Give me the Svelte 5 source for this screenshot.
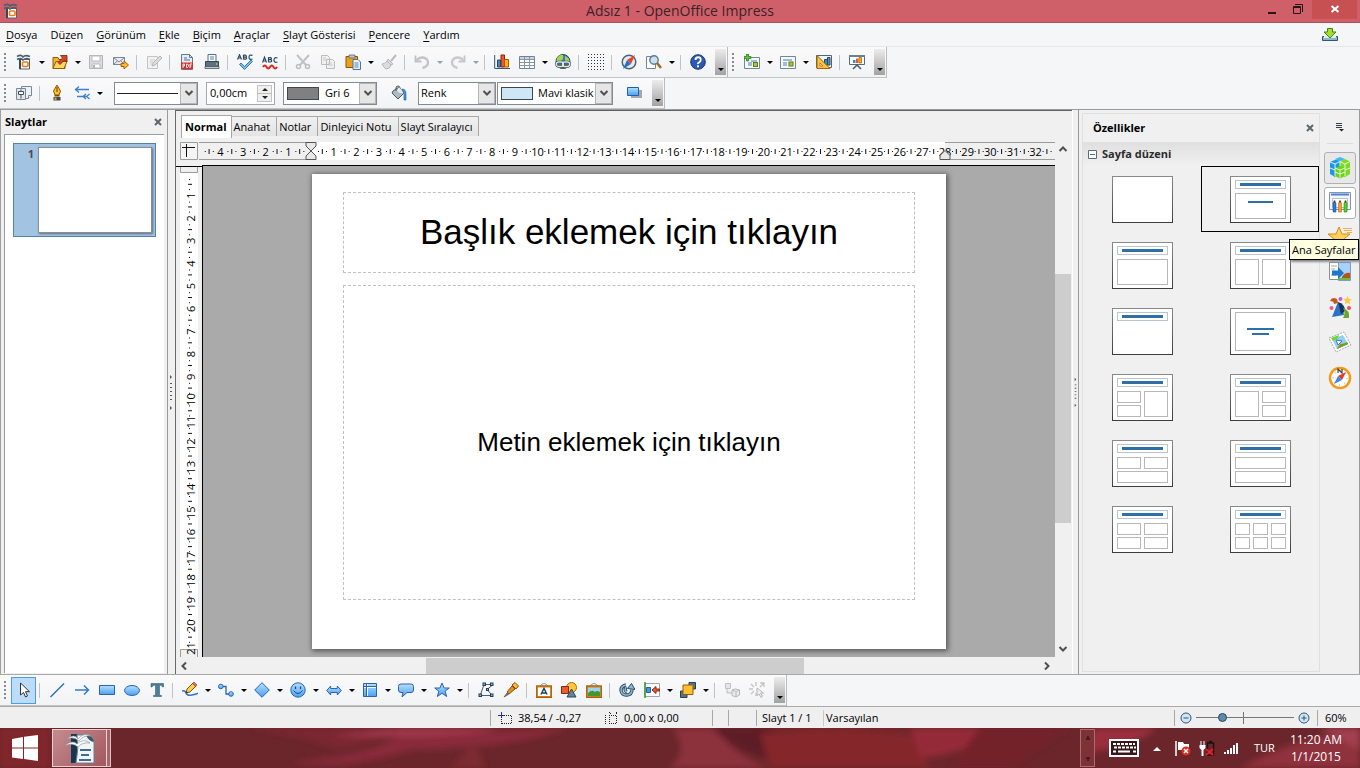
<script lang="ts">
  type Tool = { icon: string; label: string; drop?: boolean; off?: boolean; on?: boolean };
  type Item = Tool | '|';

  const menus = [
    ['', 'D', 'osya'], ['Dü', 'z', 'en'], ['', 'G', 'örünüm'], ['', 'E', 'kle'], ['', 'B', 'içim'],
    ['', 'A', 'raçlar'], ['', 'S', 'layt Gösterisi'], ['', 'P', 'encere'], ['', 'Y', 'ardım']
  ];

  const blue = 'fill="url(#blue)" stroke="#2a62b8"';

  // 16x16 toolbar glyphs
  const glyphs: Record<string, string> = {
    new: '<path d="M3.500 5.500h10v9.500h-10z" fill="#fff" stroke="#4f6473"/><path d="M3 5h2v10H3z" fill="#34495a"/><path d="M1 2.500q4-2.500 6 .5 2-2.500 7-.5M1 5.500q4-2 6 .5 3-2.500 7-.5" fill="none" stroke="#4d5f6d" stroke-width="1.600"/><rect x="6.500" y="8" width="5.500" height="4.500" rx="1" fill="#fff" stroke="#ee7b17" stroke-width="1.600"/>',
    open: '<path d="M1 3.500h5l1 2h6v9H1z" fill="#f7b32b" stroke="#9c5a00"/><path d="M1 14.500l3-7h11l-3 7z" fill="#ffd75e" stroke="#9c5a00"/><path d="M6 8.500l4.500-4.500-2-2.500h6.500V8l-2.500-2L8 10.500z" fill="#d9442b" stroke="#7c1d0e" stroke-width=".8"/>',
    save: '<path d="M1.500 1.500h13v13h-13z" fill="#dcdcdc" stroke="#b5b5b5"/><path d="M4 2h8v5H4zM4 10h8v4H4z" fill="#fff" stroke="#bcbcbc"/><path d="M5 11h2v3H5z" fill="#b5b5b5"/>',
    mail: '<path d="M.5 3.500h11v7H.5z" fill="#e8edf3" stroke="#7a8794"/><path d="M.5 3.500L6 8l5.500-4.500M.5 10.500L4.500 7M11.500 10.500L8 7" fill="none" stroke="#7a8794"/><path d="M8 9.500h3V7l4.500 4-4.500 4v-2.500H8z" fill="#ffb735" stroke="#a85e00"/>',
    edit: '<path d="M1.500 2.500h10v12h-10z" fill="#f2f2f2" stroke="#c4c4c4"/><path d="M4 6h5M4 8h3M4 10h2" stroke="#ccc"/><path d="M6 12l1-3 7-7 2 2-7 7z" fill="#dedede" stroke="#b6b6b6"/>',
    pdf: '<path d="M2.500.5h8l3 3v12h-11z" fill="#e4ecf4" stroke="#64788a"/><path d="M10.500.5v3h3" fill="none" stroke="#64788a"/><path d="M5 4h3M5 6h6" stroke="#4b78a8"/><rect x="2" y="8.500" width="12" height="6.500" fill="#dd2b2b"/><path d="M4 14v-4h1.500v2H4M7.500 13.500v-3.500h1l1 1v1.500l-1 1zM11 14v-4h2M11 12h1.500" fill="none" stroke="#fff" stroke-width=".9"/>',
    print: '<path d="M4 8V.5h8V8" fill="#f4f8fb" stroke="#557085"/><path d="M6 3h4M6 5h4" stroke="#5d88ad"/><path d="M1.500 7.500h13v5h-13z" fill="#5f7180" stroke="#36454f"/><path d="M1 12.500h14v2H1z" fill="#c5ccd1" stroke="#4b5964" stroke-width=".8"/><path d="M12 10h1.500" stroke="#8dea3a" stroke-width="1.500"/>',
    spell: '<path d="M0.600 5.500L2.500.8l2 4.700M1.200 4h2.600M6.500.8v4.700M6.500 1.200h2q2 1 0 2h-2 2.200q2 1 0 2H6.500M15.500 1.400q-3.500-1.200-3.500 1.800t3.500 1.800" fill="none" stroke="#2c4a62" stroke-width="1.200"/><path d="M4 9l3.500 3.500L14 6l1.500 1.500-8 8L2.500 10.500z" fill="#6cc0f5" stroke="#1e62a8" stroke-width=".8"/>',
    autospell: '<path d="M0.600 8.500L2.500 3.200l2 5.300M1.200 7h2.600M6.500 3.200v5M6.500 3.600h2q2 1 0 2h-2 2.200q2 1.200 0 2.400H6.500M15.500 4q-3.500-1.200-3.500 2t3.500 2" fill="none" stroke="#2c4a62" stroke-width="1.200"/><path d="M1 13q1.800-3 3.500 0t3.500 0 3.500 0 3.500 0" fill="none" stroke="#e42418" stroke-width="2"/>',
    cut: '<path d="M2 1l9 10M14 1L5 11" stroke="#c2c2c2" stroke-width="2"/><circle cx="3.500" cy="12.500" r="2" fill="none" stroke="#bdbdbd" stroke-width="1.500"/><circle cx="12.500" cy="12.500" r="2" fill="none" stroke="#bdbdbd" stroke-width="1.500"/>',
    copy: '<path d="M1.500 1.500h6l2 2v7h-8zM6.500 5.500h6l2 2v7h-8z" fill="#f0f0f0" stroke="#bcbcbc"/><path d="M3 4h3M3 6h3M8 9h4M8 11h5" stroke="#c9c9c9"/>',
    paste: '<path d="M1 2.500h11.500v11H1z" fill="#e9a01c" stroke="#8d5300"/><path d="M4 1h6v3H4z" fill="#bcc6ce" stroke="#5c6a75" stroke-width=".8"/><path d="M8 5.500h5l2.500 2.500v7.500H8z" fill="#eaf3fb" stroke="#52728e"/><path d="M9.500 9h4M9.500 11h4M9.500 13h4" stroke="#4984bd"/>',
    brush: '<path d="M15 1l-5 6" stroke="#bcbcbc" stroke-width="2"/><path d="M7 5l5 5-2 1-4-4zM6 7l4 4q-1 4-5 4-2-1-4-5 3 0 5-3z" fill="#dcdcdc" stroke="#b8b8b8"/>',
    undo: '<path d="M1.500 1.500v6h6" fill="none" stroke="#c0c0c0" stroke-width="1.800"/><path d="M2 7q3-4 7-3.500 5 1 5 5T8.500 14" fill="none" stroke="#c4c4c4" stroke-width="2.400"/>',
    redo: '<path d="M14.500 1.500v6h-6" fill="none" stroke="#c6c6c6" stroke-width="1.800"/><path d="M14 7q-3-4-7-3.500-5 1-5 5T7.500 14" fill="none" stroke="#c9c9c9" stroke-width="2.400"/>',
    chart: '<path d="M.7 1v13.500H16" fill="none" stroke="#3b556b"/><path d="M3.500 6h3v7h-3z" fill="#2f8be0" stroke="#124a88"/><path d="M7 1h3.500v12H7z" fill="#f0582b" stroke="#8b240b"/><path d="M10.500 5.500h4V13h-4z" fill="#ffb021" stroke="#a05c00"/>',
    table: '<path d="M.5 2.500h15v12H.5z" fill="#fff" stroke="#6f8494"/><path d="M1 3h14v2H1z" fill="#c9d6e0"/><path d="M1 5.500h14M1 8.500h14M1 11.500h14M5.500 3v11M10.500 3v11" stroke="#8496a4"/>',
    link: '<circle cx="8" cy="7.500" r="7" fill="#3a79bd" stroke="#24486b"/><path d="M2 4q3-4 6-3 1 4-2 6H1.500zM10 2q5 2 4.500 6L10 7z" fill="#a5d64a"/><path d="M1.500 10h13q-1.500 5-6.500 5t-6.500-5z" fill="#4b6f58"/><rect x="1.500" y="8" width="7" height="4.500" rx="2" fill="none" stroke="#31434c" stroke-width="2.400"/><rect x="7.500" y="8" width="7" height="4.500" rx="2" fill="none" stroke="#31434c" stroke-width="2.400"/><rect x="1.500" y="8" width="7" height="4.500" rx="2" fill="none" stroke="#dfe6ea" stroke-width="1.300"/><rect x="7.500" y="8" width="7" height="4.500" rx="2" fill="none" stroke="#dfe6ea" stroke-width="1.300"/>',
    dots: '<path d="M0 .5h16M0 3.500h16M0 6.500h16M0 9.500h16M0 12.500h16M0 15.500h16" stroke="#333" stroke-dasharray="1 2"/>',
    compass: '<circle cx="8" cy="8" r="6.800" fill="#e6ebef" stroke="#4e6678" stroke-width="1.500"/><path d="M14 1L6 6l4 4z" fill="#e8432b"/><path d="M2 15l4-9 4 4z" fill="#2a6fc9"/>',
    zoom: '<path d="M.5 2.500h9v12h-9z" fill="#fff" stroke="#718696"/><circle cx="8" cy="6" r="4.200" fill="#c5e2f5" stroke="#64798a" stroke-width="1.400"/><path d="M11 9l4 5" stroke="#a86a1b" stroke-width="2.500"/>',
    help: '<circle cx="8" cy="8" r="7.300" fill="#2c58b0" stroke="#173777"/><path d="M5.500 6q0-2.700 2.700-2.700T10.700 6q0 1.500-1.500 2.300T8 10" fill="none" stroke="#fff" stroke-width="1.900"/><rect x="7" y="11.300" width="2" height="2" fill="#fff"/>',
    slidenew: '<path d="M.5 3.500h15v11H.5z" fill="#f4f8fb" stroke="#738797"/><path d="M7 7h6M4 9h4M4 11h4" stroke="#4c7fae"/><rect x="9.500" y="8.500" width="4" height="4" fill="#a7c73a" stroke="#5e7d12"/><path d="M2.500 0h2v2.500H7v2H4.500V7h-2V4.500H0v-2h2.500z" fill="#58c33a" stroke="#1f7a14" stroke-width=".7"/>',
    slide: '<path d="M.5 2.500h15v12H.5z" fill="#f4f8fb" stroke="#738797"/><path d="M3 6h9M3 9h4M3 11h4" stroke="#4c7fae"/><rect x="9" y="8" width="4" height="4" fill="#a7c73a" stroke="#5e7d12"/>',
    design: '<path d="M.5 1.500h15v12H.5z" fill="#eff4f8" stroke="#4f6678"/><path d="M8.500 5.500h3V11h-3z" fill="#3688cf" stroke="#124a88"/><path d="M11.500 3.500h2.500V11h-2.500z" fill="#6d8ba0" stroke="#2a4a60"/><path d="M1 1.500v13h13z" fill="#ffc23c" stroke="#a26205"/><path d="M4 9v3h3z" fill="#fff" stroke="#a26205" stroke-width=".7"/>',
    show: '<path d="M.5 1.500h15v9H.5z" fill="#fff" stroke="#556b7c"/><path d="M0 1h16v2H0z" fill="#6b8090"/><path d="M4 6h2.500v3H4z" fill="#2f8be0"/><path d="M7 4.500h2.500V9H7z" fill="#f0582b"/><path d="M10 3.500h2.500V9H10z" fill="#ffb021" stroke="#9a4b00" stroke-width=".6"/><path d="M4 15l4-4 4 4" fill="none" stroke="#465a68" stroke-width="1.500"/>',
    styles: '<path d="M5.500 1.500h10v9l-3 3h-7z" fill="#eef2f5" stroke="#7a8994"/><path d="M15.500 10.500h-3v3" fill="#fff" stroke="#7a8994"/><path d="M.5 3.500h9v11h-9z" fill="#e0e6ea" stroke="#7a8994"/><path d="M2.500 6.500h5v3h-5zM5 9.500v4M5 6V4.500" fill="#fff" stroke="#3f525f"/>',
    pen: '<path d="M8 0l3.500 6-1.500 4H6L4.500 6z" fill="#ffc02e" stroke="#8e5708"/><path d="M8 2v5" stroke="#6a3f00"/><path d="M5.500 10h5v1.500h-5z" fill="#7a4b06"/><path d="M4.500 12h7v3.500h-7z" fill="#3d4a54"/><path d="M5.500 12.500h2v2.500h-2z" fill="#e49b25"/>',
    arrowstyle: '<path d="M1 4.500h14M5 1.500L1.500 4.500 5 7.500" fill="none" stroke="#3c80cf" stroke-width="1.300"/><path d="M3 11.500h9M12 9l-3 2.500 3 2.500M15.500 9l-3 2.500 3 2.500" fill="none" stroke="#3c80cf" stroke-width="1.300"/>',
    bucket: '<path d="M2 6l6-4 5 6-6 6-6-6z" fill="#aeb9c1" stroke="#475660"/><path d="M5 6V3q0-2 2-2t2 2v4" fill="none" stroke="#475660"/><path d="M8 2l5 6q-4 1-7-2z" fill="#e6ebee"/><path d="M11 4q4 0 4 5v6h-2V9z" fill="#3d98d9" stroke="#1c5c94" stroke-width=".6"/>',
    shadow: '<path d="M4 5h11v8H4z" fill="#a7a7a7"/><path d="M.5 2.500h11v8H.5z" fill="url(#blue)" stroke="#1f5fb5"/>',
    select: '<path d="M4.500 1v12l3-2.500 2 4.500 2-1-2-4.300h4z" fill="#fff" stroke="#333"/>',
    line: '<path d="M1.500 15L15 1.500" stroke="#2f6dc0" stroke-width="1.400"/>',
    arrow: '<path d="M1 8h13M10 3.500L14.500 8 10 12.500" fill="none" stroke="#3479cc" stroke-width="1.500"/>',
    rect: `<path d="M.5 3.500h15v9H.5z" ${blue}/>`,
    ellipse: `<ellipse cx="8" cy="8.500" rx="7.500" ry="5" ${blue}/>`,
    text: '<path d="M2 1.500h12.500v3.500h-1q-.5-2-3-2v9.500q0 1 2 1v1H4.500v-1q2 0 2-1V3q-3 0-3.500 2H2z" fill="#4b7c99" stroke="#35617c" stroke-width=".6"/>',
    curve: '<path d="M0 9q3-1 4 2t6 2 6-2" fill="none" stroke="#3479cc" stroke-width="1.600"/><path d="M4 11l1-4 6-6 3 3-6 6z" fill="#ffcf4a" stroke="#80550d"/><path d="M10.500 1.500L12 0l3 3-1.500 1.500z" fill="#e76a6a" stroke="#8a2c2c" stroke-width=".6"/><path d="M4 11l.5-2 1.500 1.500z" fill="#222"/>',
    connector: `<path d="M3 4.500h5V12h5" fill="none" stroke="#2a62b8" stroke-width="1.300"/><circle cx="2.800" cy="4.500" r="2.300" ${blue}/><circle cx="13" cy="12" r="2.300" ${blue}/>`,
    diamond: `<path d="M8 .7L15.300 8 8 15.300.7 8z" ${blue}/>`,
    smile: `<circle cx="8" cy="8" r="7.200" ${blue}/><path d="M5.500 4.500v2.500M10.500 4.500v2.500" stroke="#174a94" stroke-width="1.300"/><path d="M3.500 8.500q4.500 6 9 0" fill="none" stroke="#174a94"/>`,
    harrows: `<path d="M.7 8.500l4-4.500v2.500h6.600V4l4 4.500-4 4.500v-2.500H4.700V13z" ${blue}/>`,
    flow: `<path d="M1.500 1.500h13v13h-13z" ${blue}/><path d="M5.500 2v12M2 5.500h12" stroke="#fff"/><path d="M4.500 2v12M2 4.500h12" stroke="#2a62b8"/>`,
    callout: `<path d="M3 2h10q2.500 0 2.500 2.500V8q0 2.500-2.500 2.500H9L4 15l1-4.500H3Q.5 10.500.5 8V4.500Q.5 2 3 2z" ${blue}/>`,
    star: `<path d="M8 1l2.100 5h5.200l-4.200 3.200 1.600 5.300L8 11.300l-4.700 3.200 1.600-5.300L.7 6h5.200z" ${blue}/>`,
    points: '<path d="M6.500 2.500h7M5.500 4L2.500 12.500M4 13.500h9M14 3.500L9 7.500l4 4.500" fill="none" stroke="#4b5f70"/><g fill="#7fb2dc" stroke="#223f5a"><rect x="5" y="1" width="2.500" height="2.500"/><rect x="12.500" y="1" width="2.500" height="2.500"/><rect x="1" y="12" width="2.500" height="2.500"/><rect x="12.500" y="12" width="2.500" height="2.500"/><rect x="8.500" y="6.500" width="2" height="2"/></g>',
    glue: '<path d="M9 3l3-2.500 3.500 3.500L13 7z" fill="#ffb734" stroke="#8a5210"/><path d="M9 4l3 3-6 5-2-2z" fill="#e98d1d" stroke="#8a5210"/><path d="M4 11l1.500 1.500L1 15z" fill="#777" stroke="#444" stroke-width=".6"/>',
    fontwork: '<path d="M4 4q4-5 8 0" fill="none" stroke="#8b98a3"/><path d="M1 4.500h14v10.500H1z" fill="#fff" stroke="#d27b14" stroke-width="1.800"/><path d="M.3 3.800h15.400v11.900H.3z" fill="none" stroke="#7e4408" stroke-width=".6"/><path d="M5 12.500L8 6.500l3 6M6 11h4" fill="none" stroke="#27435c" stroke-width="1.500"/>',
    image: '<path d="M4 4q4-5 8 0" fill="none" stroke="#8b98a3"/><path d="M1 4.500h14v10.500H1z" fill="#9ed2f5" stroke="#d27b14" stroke-width="1.800"/><path d="M.3 3.800h15.400v11.900H.3z" fill="none" stroke="#7e4408" stroke-width=".6"/><path d="M2 11q4-4 7-1 2-2 5 0v4H2z" fill="#3f9a2f"/>',
    shapes: '<circle cx="10.500" cy="5.500" r="5" fill="#ffc83d" stroke="#b06c08"/><path d="M.5 4.500h7v7h-7z" fill="#ee5a2b" stroke="#8d260a"/><path d="M10.500 7l4.500 8H6z" fill="#64839c" stroke="#2a475e"/>',
    rotate: '<path d="M7 3Q2 4 2 8.500 3 13.500 8 13t5-5.500M8 10q-3-1-1-5" fill="none" stroke="#2f4d66" stroke-width="3.400"/><path d="M8.500 6.500l4-5 3.500 6z" fill="#8bb6d4" stroke="#2f4d66"/><path d="M7 3Q2 4 2 8.500 3 13.500 8 13t5-5.500M8 10q-3-1-1-5" fill="none" stroke="#8bb6d4" stroke-width="1.500"/>',
    align: '<path d="M1 1.500h14.500v13H1z" fill="#fff" stroke="#9aa6af"/><path d="M1 0v16" stroke="#2f9a1c" stroke-width="1.500"/><path d="M2.500 5.500h4v5h-4z" fill="#4a93dd" stroke="#1f5fb5"/><path d="M8 8l4-3.500V7h3.500v2H12v2.500z" fill="#f0582b" stroke="#94260c"/>',
    arrange: '<path d="M9 .5h6.500V7H9zM.5 9H7v6.500H.5z" fill="#4f7595" stroke="#253f57"/><path d="M3 3h10v9.500H3z" fill="#ffc02e" stroke="#9a5b07"/>',
    extrude: '<path d="M1.500 1.500h5v5h-5zM3 7v4h5" fill="#e6e6e6" stroke="#c0c0c0"/><path d="M8 8l3-1 4.500 1v5L12 15l-4-1.500zM8 8l4 1.500L15.500 8M12 9.500V15" fill="#e9e9e9" stroke="#b9b9b9"/>',
    interact: '<path d="M7 0v4M2 2l3 3M0 7h4M2 12l3-3M7 14v-3M11 5l4-4M11 1h4v4" stroke="#c6c6c6" stroke-width="1.400" fill="none"/><path d="M8 6v8l2-2 2 3.500 1.500-1-2-3.500h3z" fill="#eee" stroke="#b8b8b8"/>',
    update: '<path d="M.5 9.500h15v4H.5z" fill="#8db4d2" stroke="#35566f"/><path d="M2 9h12v2H2z" fill="#dcebf5"/><path d="M5.500 1.500h5V5H14l-6 6-6-6h3.500z" fill="#a6dc2a" stroke="#3c8a10"/>'
  };

  // 24x24 sidebar deck glyphs
  const decks = [
    { label: 'Özellikler', state: 'current', art: '<path d="M2 6l6-2.500L12 5v7l-5 9-5-3z" fill="#1c97ea"/><path d="M7 3l5-2 5 2-5 2.500z" fill="#48b5f7"/><path d="M12 5.500L17 3l5 2.500V18l-5 3-5-2z" fill="#7ddb24"/><path d="M7 12l5-2 5 2v8l-5 2.500L7 20z" fill="#6bd31c"/><path d="M2 6l5 2 5-2.500 5 2.500 5-2.500M7 8v12M12 5.500V10M17 8v12M2 12l5 2M7 12l5 2 5-2M17 14l5-2M12 14v8M7 16l5 2 5-2" fill="none" stroke="#eefae4" stroke-width=".9"/>' },
    { label: 'Ana Sayfalar', state: 'hover', art: '<path d="M1.500 1.500h21v17h-21z" fill="#f1f4fa" stroke="#8095b5"/><path d="M3 3.500h18" stroke="#4f80d0" stroke-width="2"/><path d="M4.500 7.500h15v9h-15z" fill="#fff" stroke="#b7bfca"/><path d="M5 12l1.500-2L8 12v9H5z" fill="#2b79e3" stroke="#1d3f77" stroke-width=".5"/><path d="M10.500 12l1.500-2 1.500 2v9h-3z" fill="#f5a623" stroke="#8a560a" stroke-width=".5"/><path d="M16 12l1.500-2 1.500 2v9h-3z" fill="#4fd81f" stroke="#226a0d" stroke-width=".5"/><path d="M6.500 9.500v2M12 9.500v2M17.500 9.500v2" stroke="#4b2f1a" stroke-width="1.500"/>' },
    { label: 'Özel Canlandırma', state: '', art: '<path d="M11 1l3 7h8l-6 5 2 8-7-5-7 5 2-8-6-5h8z" fill="#ffd05a" stroke="#d98a1c"/><path d="M15 2.500h9M16 4.500h8M19 6.500h5" stroke="#f0b04a"/>' },
    { label: 'Slayt Geçişi', state: '', art: '<path d="M1.500 1.500h12v17h-12z" fill="#fff" stroke="#8f8f8f"/><path d="M3 5h6M3 8h4M3 14h5" stroke="#aaa"/><path d="M10.500 1.500h12v18h-12z" fill="#a9d2fb" stroke="#7a9dd0"/><path d="M14 16q3-5 8-4v5h-8z" fill="#b0581a"/><path d="M11 17h11v2H11z" fill="#6dbf2b"/><path d="M4 9.500h6V6l6 6-6 6v-3.500H4z" fill="#1c76c9"/>' },
    { label: 'Biçemler', state: '', art: '<path d="M4 21l6-15q6 5 6 13z" fill="#2a72c8"/><path d="M10 6q7 2 7 9l-4 3z" fill="#12365c"/><path d="M2 5q2-5 7-2l1 4-4 1q0-3-4-3z" fill="#c4581a"/><path d="M15 12q7 2 6 10h-6q3-5 0-10z" fill="#6aa62a"/><circle cx="12.500" cy="3" r="2" fill="#c65be0"/><circle cx="3.500" cy="12" r="2" fill="#ee5a96"/><circle cx="21" cy="12" r="2" fill="#ee4e4e"/><path d="M19.500 0l1.300 3 3 .3-2.300 2 .7 3-2.700-1.600L16.800 8l.7-3-2.300-2 3-.3z" fill="#ffc93c"/>' },
    { label: 'Galeri', state: '', art: '<path d="M1 7L16 1l7 13L8 21z" fill="#fff" stroke="#a9a9a9" stroke-dasharray="2 1"/><path d="M4 8l11-4 5 9L9 18z" fill="#8fd0f5"/><path d="M3 7l8-3-1 3-5 3z" fill="#6fd82a"/><path d="M9 18l3-5 8-1v1z" fill="#c0762a"/><path d="M9 18l11-5-1-2-9 5z" fill="#57b01e"/><path d="M8 9l6 1-4 4z" fill="#fff" stroke="#2a5c96" stroke-width=".8"/>' },
    { label: 'Gezgin', state: '', art: '<circle cx="12" cy="12" r="10" fill="#fff" stroke="#f39a17" stroke-width="2.500"/><circle cx="12" cy="12" r="7" fill="none" stroke="#ccc" stroke-dasharray="1 4.500" stroke-width="2"/><path d="M10 7V3l4 4V3" fill="none" stroke="#444" stroke-width="1.200"/><path d="M18 6l-4 8-4-4z" fill="#e23a2c"/><path d="M6 18l4-8 4 4z" fill="#3b86e8"/>' }
  ];

  const standardBar: Item[] = [
    { icon: 'new', label: 'Yeni', drop: true },
    { icon: 'open', label: 'Aç', drop: true },
    { icon: 'save', label: 'Kaydet', off: true },
    { icon: 'mail', label: 'E-posta' }, '|',
    { icon: 'edit', label: 'Düzenle', off: true }, '|',
    { icon: 'pdf', label: 'PDF olarak aktar' },
    { icon: 'print', label: 'Yazdır' }, '|',
    { icon: 'spell', label: 'Yazım denetimi' },
    { icon: 'autospell', label: 'Otomatik yazım denetimi' }, '|',
    { icon: 'cut', label: 'Kes', off: true },
    { icon: 'copy', label: 'Kopyala', off: true },
    { icon: 'paste', label: 'Yapıştır', drop: true },
    { icon: 'brush', label: 'Biçim fırçası', off: true }, '|',
    { icon: 'undo', label: 'Geri al', drop: true, off: true },
    { icon: 'redo', label: 'Yinele', drop: true, off: true }, '|',
    { icon: 'chart', label: 'Çizelge' },
    { icon: 'table', label: 'Tablo', drop: true },
    { icon: 'link', label: 'Köprü' }, '|',
    { icon: 'dots', label: 'Izgara' }, '|',
    { icon: 'compass', label: 'Gezgin' },
    { icon: 'zoom', label: 'Yakınlaştır', drop: true }, '|',
    { icon: 'help', label: 'Yardım' }
  ];

  const presentationBar: Item[] = [
    { icon: 'slidenew', label: 'Yeni slayt', drop: true },
    { icon: 'slide', label: 'Slayt düzeni', drop: true },
    { icon: 'design', label: 'Slayt tasarımı' }, '|',
    { icon: 'show', label: 'Slayt gösterisi' }
  ];

  const drawBar: Item[] = [
    { icon: 'select', label: 'Seç', on: true }, '|',
    { icon: 'line', label: 'Çizgi' },
    { icon: 'arrow', label: 'Ok' },
    { icon: 'rect', label: 'Dikdörtgen' },
    { icon: 'ellipse', label: 'Elips' },
    { icon: 'text', label: 'Metin' }, '|',
    { icon: 'curve', label: 'Eğri', drop: true },
    { icon: 'connector', label: 'Bağlayıcı', drop: true },
    { icon: 'diamond', label: 'Temel şekiller', drop: true },
    { icon: 'smile', label: 'Sembol şekiller', drop: true },
    { icon: 'harrows', label: 'Blok oklar', drop: true },
    { icon: 'flow', label: 'Akış çizelgeleri', drop: true },
    { icon: 'callout', label: 'Belirtme çizgileri', drop: true },
    { icon: 'star', label: 'Yıldızlar', drop: true }, '|',
    { icon: 'points', label: 'Noktalar' },
    { icon: 'glue', label: 'Yapışma noktaları' }, '|',
    { icon: 'fontwork', label: 'Fontwork' },
    { icon: 'shapes', label: 'Galeri' },
    { icon: 'image', label: 'Dosyadan' }, '|',
    { icon: 'rotate', label: 'Döndür' },
    { icon: 'align', label: 'Hizala', drop: true },
    { icon: 'arrange', label: 'Düzenle', drop: true }, '|',
    { icon: 'extrude', label: 'Derinlik', off: true },
    { icon: 'interact', label: 'Etkileşim', off: true }
  ];

  const views = ['Normal', 'Anahat', 'Notlar', 'Dinleyici Notu', 'Slayt Sıralayıcı'];
  let view = $state('Normal');

  // boxes and bars are x, y, width, height
  type Layout = { name: string; title?: boolean; boxes: number[][]; bars?: number[][] };
  const layouts: Layout[] = [
    { name: 'Boş', boxes: [] },
    { name: 'Başlık slaytı', title: true, boxes: [[5, 17, 50, 25]], bars: [[18, 25, 25, 2]] },
    { name: 'Başlık, içerik', title: true, boxes: [[5, 17, 50, 25]] },
    { name: 'Başlık, 2 içerik', title: true, boxes: [[5, 17, 23, 25], [32, 17, 23, 25]] },
    { name: 'Yalnız başlık', title: true, boxes: [] },
    { name: 'Ortalanmış metin', boxes: [[5, 4, 50, 38]], bars: [[17, 20, 27, 2], [22, 25, 17, 2]] },
    { name: '2 içerik ve içerik', title: true, boxes: [[5, 17, 23, 11], [5, 31, 23, 11], [32, 17, 23, 25]] },
    { name: 'İçerik ve 2 içerik', title: true, boxes: [[5, 17, 23, 25], [32, 17, 23, 11], [32, 31, 23, 11]] },
    { name: 'İçerik üzerinde 2 içerik', title: true, boxes: [[5, 17, 23, 11], [32, 17, 23, 11], [5, 31, 50, 11]] },
    { name: 'İçerik üzerinde içerik', title: true, boxes: [[5, 17, 50, 11], [5, 31, 50, 11]] },
    { name: '4 içerik', title: true, boxes: [[5, 17, 23, 11], [32, 17, 23, 11], [5, 31, 23, 11], [32, 31, 23, 11]] },
    { name: '6 içerik', title: true, boxes: [[5, 17, 14, 11], [23, 17, 14, 11], [41, 17, 14, 11], [5, 31, 14, 11], [23, 31, 14, 11], [41, 31, 14, 11]] }
  ];
  let chosen = $state(1);
  let zoom = $state(25);

  const cm = 634 / 28;
  const range = (from: number, to: number) => Array.from({ length: to - from + 1 }, (_, i) => from + i);
  const hMarks = range(-5, 32);
  const vMarks = range(0, 21);
</script>

{#snippet glyph(name: string)}
  <svg class="glyph" viewBox="0 0 16 16" aria-hidden="true">{@html glyphs[name]}</svg>
{/snippet}

{#snippet tools(items: Item[])}
  {#each items as item}
    {#if item === '|'}
      <span class="sep"></span>
    {:else}
      <button class="tool" class:on={item.on} disabled={item.off} aria-label={item.label}>{@render glyph(item.icon)}</button>
      {#if item.drop}
        <button class="drop" disabled={item.off} aria-label="{item.label} seçenekleri"></button>
      {/if}
    {/if}
  {/each}
{/snippet}

{#snippet chevron(turn: string)}
  <svg class="chevron {turn}" viewBox="0 0 10 10" aria-hidden="true"><path d="M1.500 3L5 6.500 8.500 3" /></svg>
{/snippet}

{#snippet splitDots()}
  <svg class="split-dots" viewBox="0 0 6 38" aria-hidden="true"><path d="M2 2l2 2-2 2zM2 33l2 2-2 2zM2 10h2v1H2zM2 14h2v1H2zM2 18h2v1H2zM2 22h2v1H2zM2 26h2v1H2z" /></svg>
{/snippet}

<svg class="defs" aria-hidden="true">
  <defs>
    <linearGradient id="blue" x1="0" y1="0" x2="0" y2="1">
      <stop offset="0" stop-color="#b4e0ff" />
      <stop offset="1" stop-color="#4d9fec" />
    </linearGradient>
    <linearGradient id="frame" x1="0" y1="0" x2="0" y2="1">
      <stop offset="0" stop-color="#8a8a8a" />
      <stop offset="1" stop-color="#3e3e3e" />
    </linearGradient>
  </defs>
</svg>

<div class="screen">
  <header class="titlebar">
    <span class="app-icon">{@render glyph('new')}</span>
    <h1>Adsız 1 - OpenOffice Impress</h1>
    <div class="window-buttons">
      <button aria-label="Simge durumuna küçült"><svg viewBox="0 0 10 10"><path d="M1 9h8" stroke-width="2" /></svg></button>
      <button aria-label="Geri yükle"><svg viewBox="0 0 10 10"><path d="M.5 2.500h7v7h-7zM.5 3.500h7M2 .5h7.500V8" /></svg></button>
      <button class="close" aria-label="Kapat"><svg viewBox="0 0 10 10"><path d="M1.500 2l7 6M8.500 2l-7 6" stroke-width="2" /></svg></button>
    </div>
  </header>

  <nav class="menubar">
    {#each menus as [before, key, after]}
      <button>{before}<u>{key}</u>{after}</button>
    {/each}
    <button class="update" aria-label="Güncelleme">{@render glyph('update')}</button>
  </nav>

  <div class="bar-row">
    <div class="bar">
      <span class="grip"></span>
      {@render tools(standardBar)}
      <button class="more" aria-label="Diğer"></button>
    </div>
    <div class="bar">
      <span class="grip"></span>
      {@render tools(presentationBar)}
      <button class="more" aria-label="Diğer"></button>
    </div>
  </div>

  <div class="bar-row">
    <div class="bar">
      <span class="grip"></span>
      {@render tools([{ icon: 'styles', label: 'Biçemler' }, '|', { icon: 'pen', label: 'Çizgi' }, { icon: 'arrowstyle', label: 'Ok biçemi', drop: true }])}
      <div class="fields">
        <label class="combo line-style">
          <span class="rule"></span>
          <select aria-label="Çizgi biçemi"><option></option></select>
          <span class="combo-arrow">{@render chevron('down')}</span>
        </label>
        <label class="spin">
          <input type="text" value="0,00cm" aria-label="Çizgi genişliği" />
          <span class="spin-arrows"><i class="up"></i><i></i></span>
        </label>
        <label class="combo line-color">
          <span class="swatch gray"></span>
          <select aria-label="Çizgi rengi"><option>Gri 6</option></select>
          <span class="combo-arrow">{@render chevron('down')}</span>
        </label>
      </div>
      {@render tools([{ icon: 'bucket', label: 'Alan' }])}
      <div class="fills">
        <label class="combo fill-type">
          <select aria-label="Dolgu türü"><option>Renk</option></select>
          <span class="combo-arrow">{@render chevron('down')}</span>
        </label>
        <label class="combo fill-color">
          <span class="swatch sky"></span>
          <select aria-label="Dolgu rengi"><option>Mavi klasik</option></select>
          <span class="combo-arrow">{@render chevron('down')}</span>
        </label>
      </div>
      {@render tools([{ icon: 'shadow', label: 'Gölge' }])}
      <button class="more" aria-label="Diğer"></button>
    </div>
  </div>

  <main>
    <aside class="slides">
      <header>
        <h2>Slaytlar</h2>
        <button class="x" aria-label="Slayt bölmesini kapat"><svg viewBox="0 0 8 8"><path d="M1 1l6 6M7 1L1 7" /></svg></button>
      </header>
      <ol>
        <li><span>1</span><button class="preview" aria-label="Slayt 1"></button></li>
      </ol>
    </aside>
    <div class="splitter">{@render splitDots()}</div>

    <section class="editor">
      <div class="tabs" role="tablist">
        {#each views as name}
          <button role="tab" aria-selected={view === name} onclick={() => (view = name)}>{name}</button>
        {/each}
      </div>

      <div class="stage">
        <div class="canvas">
          <div class="ruler-row">
            <svg class="corner" viewBox="0 0 18 18" aria-hidden="true"><path d="M.5.5h17v17H.5z" class="box" /><path d="M2 5.500h13M6.500 2v13" class="cross" /></svg>
            <svg class="h-ruler" aria-hidden="true">
              <rect class="outer" x="-1" y=".5" width="2000" height="17" />
              <svg x="50%" overflow="visible">
                <g transform="translate(-316 0)">
                  <rect class="inner" width="634" height="18" />
                  {#each hMarks as n}
                    {#if n !== 0 && n > -5}<text x={n * cm} y="14">{Math.abs(n)}</text>{/if}
                    <path class="tick" d="M{n * cm + 7} 9.500h1M{n * cm + cm / 2} 7v5M{n * cm + 15} 9.500h1" />
                  {/each}
                  <path class="marker" d="M-5 .5H5V4L0 9l5 5v3.500H-5V14l5-5-5-5z" />
                  <path class="marker" d="M629 17.500v-4l5-5 5 5v4z" />
                </g>
              </svg>
            </svg>
          </div>

          <div class="work-row">
            <svg class="v-ruler" aria-hidden="true">
              <rect class="inner" x="4" y="8" width="18" height="476" />
              <path class="cap" d="M4.500 1.500h17v6h-17zM4.500 484.500h17v20h-17z" />
              <path class="edge" d="M0 1.500h26" />
              {#each vMarks as n}
                {#if n !== 0}<text transform="translate(19 {n * cm + 8}) rotate(-90)">{n}</text>{/if}
                {#if n < 21}
                  <path class="tick" d="M13.500 {n * cm + 14}v1M12 {n * cm + 8 + cm / 2}h4M13.500 {n * cm + 24}v1" />
                {/if}
              {/each}
            </svg>
            <div class="workspace">
              <article class="slide">
                <div class="holder title">Başlık eklemek için tıklayın</div>
                <div class="holder body">Metin eklemek için tıklayın</div>
              </article>
            </div>
          </div>

          <div class="scroll h">
            <button aria-label="Sola kaydır">{@render chevron('left')}</button>
            <span class="before"></span><span class="thumb"></span><span class="after"></span>
            <button aria-label="Sağa kaydır">{@render chevron('right')}</button>
          </div>
        </div>
        <div class="scroll v">
          <button aria-label="Yukarı kaydır">{@render chevron('up')}</button>
          <span class="before"></span><span class="thumb"></span><span class="after"></span>
          <button aria-label="Aşağı kaydır">{@render chevron('down')}</button>
        </div>
      </div>
    </section>
    <div class="splitter right">{@render splitDots()}</div>

    <aside class="sidebar">
      <section class="deck">
        <header>
          <h2>Özellikler</h2>
          <button class="x" aria-label="Kenar çubuğunu kapat"><svg viewBox="0 0 8 8"><path d="M1 1l6 6M7 1L1 7" /></svg></button>
        </header>
        <h3>
          <svg viewBox="0 0 9 9" aria-hidden="true"><path d="M.5.5h8v8h-8zM2 4.500h5" /></svg>
          Sayfa düzeni
        </h3>
        <div class="layouts">
          {#each layouts as layout, i}
            <button class:chosen={chosen === i} aria-label={layout.name} onclick={() => (chosen = i)}>
              <svg viewBox="0 0 61 47" shape-rendering="crispEdges">
                <rect class="page" x=".5" y=".5" width="60" height="46" />
                {#if layout.title}
                  <rect class="head" x="5.500" y="4.500" width="50" height="8" />
                  <rect class="stroke" x="10" y="7" width="41" height="3" />
                {/if}
                {#each layout.boxes as [x, y, w, h]}
                  <rect class="box" x={x + 0.5} y={y + 0.5} width={w} height={h} />
                {/each}
                {#each layout.bars ?? [] as [x, y, w, h]}
                  <rect class="stroke" {x} {y} width={w} height={h} />
                {/each}
              </svg>
            </button>
          {/each}
        </div>
      </section>

      <div class="deck-tabs">
        <button class="deck-menu" aria-label="Kenar çubuğu ayarları"><svg viewBox="0 0 10 10"><path d="M1 1.500h6M1 3.500h6M1 5.500h6" /><path class="tri" d="M4 7h5L6.500 9.500z" /></svg></button>
        {#each decks as deck}
          <button class="deck-tab {deck.state}" aria-label={deck.label}>
            <svg viewBox="0 0 24 24">{@html deck.art}</svg>
            {#if deck.state === 'hover'}<span class="tooltip">{deck.label}</span>{/if}
          </button>
        {/each}
      </div>
    </aside>
  </main>

  <div class="bar-row">
    <div class="bar">
      <span class="grip"></span>
      {@render tools(drawBar)}
      <button class="more" aria-label="Diğer"></button>
    </div>
  </div>

  <footer class="statusbar">
    <span></span>
    <span class="measure">
      <svg viewBox="0 0 14 12" aria-hidden="true"><path d="M0 3.500h6M3.500 0v6" stroke="#2530c8" /><path d="M4 3.500h10M13.500 4v7M4 11.500h10M3.500 5v7" stroke="#222" stroke-dasharray="1 1" /></svg>
      <span class="position">38,54 / -0,27</span>
      <svg viewBox="0 0 14 12" aria-hidden="true"><path d="M5 3.500h8M12.500 4v7M5 11.500h8M5.500 5v7M1.500 3v9M5 .5h2M12 .5h2M6 1.500h1M12 1.500h1" stroke="#222" stroke-dasharray="1 1" /></svg>
      <span>0,00 x 0,00</span>
    </span>
    <span></span>
    <span></span>
    <span>Slayt 1 / 1</span>
    <span>Varsayılan</span>
    <span class="zoomer">
      <button aria-label="Uzaklaştır"><svg viewBox="0 0 12 12"><circle cx="6" cy="6" r="5" /><path d="M3.500 6h5" /></svg></button>
      <input type="range" min="0" max="100" bind:value={zoom} aria-label="Yakınlaştırma" />
      <button aria-label="Yakınlaştır"><svg viewBox="0 0 12 12"><circle cx="6" cy="6" r="5" /><path d="M3.500 6h5M6 3.500v5" /></svg></button>
    </span>
    <span class="percent">60%</span>
  </footer>

  <div class="taskbar">
    <svg class="petals" viewBox="0 0 1360 40" preserveAspectRatio="none" aria-hidden="true">
      <defs><filter id="soft"><feGaussianBlur stdDeviation="3" /></filter></defs>
      <g filter="url(#soft)">
        <path d="M0 0h50v40H0z" fill="#80252b" />
        <path d="M250 0q60 10 90 22l60-18v-4z" fill="#7c2830" />
        <path d="M290 34q70-4 110-26l170-8q-60 20-160 22-60 20-120 12z" fill="#8a2c3a" />
        <path d="M330 8l70-8h100q-40 12-170 8z" fill="#a0384c" />
        <path d="M450 40l25-26 10 26z" fill="#7d2931" />
        <path d="M672 0q20 24-4 40h100q-40-16-50-40z" fill="#8c303c" />
        <path d="M712 0h60q-10 20 4 30-36-2-64-30z" fill="#5d1f28" />
        <path d="M760 6q70-10 150 0l20 34H770z" fill="#84252b" />
        <path d="M910 0h90q-30 26-80 30z" fill="#942a38" />
        <path d="M980 0h90l-60 40h-60z" fill="#732229" />
        <path d="M1096 0h60q-20 20-74 24z" fill="#9b2f3e" />
        <path d="M1240 40q60-34 120-36v36z" fill="#8f303c" />
        <path d="M1320 0h40v22z" fill="#a34150" />
      </g>
    </svg>
    <button class="start" aria-label="Başlat"><svg viewBox="0 0 26 26"><path d="M0 4l11-2v10.500H0zM12 1.800L26 0v12.500H12zM0 13.500h11V24L0 22.500zM12 13.500h14V26l-14-2z" /></svg></button>
    <button class="task" aria-label="OpenOffice Impress">
      <svg viewBox="0 0 32 32"><path d="M7 2h6v29H7z" fill="#17364f" /><path d="M13 3h12l5 6v22H12q3-14 1-28z" fill="#f3f6f8" stroke="#6c8190" /><path d="M22 3q3 7 8 7-1-6-8-7z" fill="#36576f" /><path d="M2 7q9-6 12 0 6-7 13-3-8-1-12 5-5-5-13-2zM0 14q9-7 13-2 6-6 13-1-8-1-12 4-5-5-14-1z" fill="#fff" stroke="#7a8c98" stroke-width=".6" /><path d="M16 18h11M17 23h8M15 28h12" stroke="#3f6c8c" stroke-width="2" /></svg>
    </button>
    <span class="task-edge"></span>

    <div class="tray">
      <span class="lang-grip"></span>
      <button aria-label="Dokunmatik klavye"><svg class="kbd" viewBox="0 0 30 18"><path d="M1 1h28v16H1z" fill="#3a1518" stroke="#fff" stroke-width="2" /><path d="M4 5h22M5 8.500h22M4 12.500h3M24 12.500h3" stroke="#fff" stroke-width="2" stroke-dasharray="3 1" /><path d="M9 12.500h12" stroke="#fff" stroke-width="2" /></svg></button>
      <button aria-label="Gizli simgeler"><svg class="up" viewBox="0 0 8 5"><path d="M0 5l4-4 4 4z" fill="#fff" /></svg></button>
      <button aria-label="İşlem merkezi"><svg viewBox="0 0 16 16"><path d="M1 1v15" stroke="#fff" stroke-width="1.500" /><path d="M3 2h5l1 2h5v6H3z" fill="#fff" /><circle cx="11" cy="11" r="4.500" fill="#e02a20" /><path d="M9 9l4 4M13 9l-4 4" stroke="#fff" stroke-width="1.500" /></svg></button>
      <button aria-label="Güç"><svg viewBox="0 0 16 16"><path d="M2 1v4M5 1v4" stroke="#fff" /><path d="M.5 5h6v3l-2 2v6h-2v-6l-2-2z" fill="#fff" /><path d="M8.500 3h6v12h-6zM10 1.500h3" fill="none" stroke="#1d1012" stroke-width="1.500" /><path d="M7 9l7 6M14 9l-7 6" stroke="#e8202a" stroke-width="2" /></svg></button>
      <button aria-label="Ağ"><svg viewBox="0 0 16 16"><path d="M1 12h2v2H1zM4 10h2v4H4zM7 8h2v6H7zM10 5h2v9h-2zM13 3h2v11h-2z" fill="#fff" /></svg></button>
      <button class="lang">TUR</button>
      <button class="clock"><span>11:20 AM</span><span>1/1/2015</span></button>
    </div>
  </div>
</div>

<style>
  :global(body) {
    margin: 0;
    background: #efefef;
  }

  .screen {
    display: flex;
    flex-direction: column;
    height: 100vh;
    overflow: hidden;
    font: 11px/16px 'Open Sans', 'Noto Sans', sans-serif;
    color: #000;
    background: #f5f6f8;
  }

  .defs {
    position: absolute;
    width: 0;
    height: 0;
  }

  button, input, select {
    margin: 0;
    padding: 0;
    border: 0;
    background: none;
    font: inherit;
    color: inherit;
  }

  h1, h2, h3, ol { margin: 0; padding: 0; }
  h2, h3 { font-size: 11px; line-height: 16px; font-weight: 700; }

  .glyph {
    display: block;
    width: 16px;
    height: 16px;
  }

  .titlebar {
    display: grid;
    grid-template-columns: 1fr auto 1fr;
    height: 22px;
    border-bottom: 1px solid #b14d56;
    background: #cf606a;
  }
  .titlebar h1 {
    font-size: 14px;
    line-height: 22px;
    font-weight: 400;
    color: #3c2126;
  }
  .app-icon { padding: 3px; }
  .window-buttons {
    display: flex;
    justify-content: flex-end;
    padding-right: 3px;
  }
  .window-buttons button {
    width: 26px;
    height: 19px;
  }
  .window-buttons .close {
    width: 45px;
    margin-left: 1px;
    background: #c75050;
  }
  .window-buttons svg {
    width: 10px;
    height: 10px;
    fill: none;
    stroke: #261618;
  }
  .window-buttons .close svg { stroke: #fff; }

  .menubar {
    display: flex;
    align-items: center;
    gap: 1px;
    height: 23px;
    border-bottom: 1px solid #e6e7e9;
  }
  .menubar button { padding: 0 6px; }
  .menubar u { text-underline-offset: 2px; }
  .menubar .update {
    margin-left: auto;
    padding-right: 22px;
  }

  .bar-row {
    display: flex;
    height: 31px;
  }
  .bar {
    display: flex;
    align-items: center;
    border-right: 1px solid #b9bbbd;
    border-bottom: 1px solid #c2c4c6;
    background: linear-gradient(#fafafb, #f2f3f5);
  }

  .grip {
    width: 2px;
    height: 18px;
    margin: 0 5px 0 4px;
    background: repeating-linear-gradient(#8a8a8a 0 2px, transparent 2px 4px);
  }
  .tool {
    display: flex;
    align-items: center;
    justify-content: center;
    width: 25px;
    height: 27px;
    box-sizing: border-box;
  }
  .tool.on {
    border: 1px solid #4f9be6;
    background: #bcdcfb;
  }
  .drop {
    width: 11px;
    height: 25px;
  }
  .drop::before, .more::before {
    content: '';
    display: block;
    width: 0;
    margin: 0 auto;
    border: 3px solid transparent;
    border-top-color: #000;
    border-bottom: 0;
  }
  .drop:disabled::before { border-top-color: #9c9c9c; }
  .sep {
    width: 1px;
    height: 15px;
    margin: 0 4px 0 3px;
    background: #c0c2c4;
  }
  .more {
    display: flex;
    align-items: flex-end;
    width: 11px;
    height: 26px;
    margin: 0 1px 0 5px;
    padding-bottom: 4px;
    background: linear-gradient(#ececec, #a2a2a2);
  }

  .fields, .fills {
    display: flex;
    align-items: center;
    gap: 8px;
    margin: 0 9px;
  }
  .fills {
    gap: 1px;
    margin: 0 9px 0 7px;
  }
  .combo, .spin {
    display: flex;
    align-items: center;
    height: 23px;
    box-sizing: border-box;
    border: 1px solid #848a93;
    background: #fff;
  }
  .spin { width: 69px; border-color: #a4a8ae; }
  .line-style { width: 84px; }
  .line-color { width: 94px; }
  .fill-type { width: 78px; }
  .fill-color { width: 116px; }
  .combo select {
    appearance: none;
    flex: 1;
    min-width: 0;
    padding-left: 2px;
    outline: 0;
  }
  .line-color select { padding-left: 6px; }
  .fill-color select { padding-left: 5px; }
  .line-style select { flex: 0 0 2px; padding: 0; }
  .rule {
    flex: 1;
    height: 1px;
    margin-left: 2px;
    background: #222;
  }
  .swatch {
    width: 32px;
    height: 13px;
    margin-left: 3px;
    border: 1px solid #3a4754;
    box-sizing: border-box;
  }
  .gray { background: #808080; }
  .sky { background: #cfe7f5; }
  .combo-arrow {
    display: flex;
    align-items: center;
    justify-content: center;
    width: 15px;
    height: 19px;
    border: 1px solid #b5b5b5;
    background: #e6e6e6;
    pointer-events: none;
  }
  .spin input {
    flex: 1;
    min-width: 0;
    padding-left: 3px;
    outline: 0;
  }
  .spin-arrows {
    display: flex;
    flex-direction: column;
    gap: 5px;
    align-items: center;
    justify-content: center;
    width: 13px;
    height: 15px;
    margin-right: 2px;
    border: 1px solid #c3c3c3;
    background: linear-gradient(#f0f0f0 7px, #bbb 7px 8px, #f0f0f0 8px);
  }
  .spin-arrows i {
    border: 3px solid transparent;
    border-top-color: #222;
    border-bottom: 0;
  }
  .spin-arrows .up {
    border-top: 0;
    border-bottom: 3px solid #222;
  }

  .chevron {
    display: block;
    width: 10px;
    height: 10px;
    fill: none;
    stroke: #505050;
    stroke-width: 2;
  }
  .up.chevron { transform: rotate(180deg); }
  .left.chevron { transform: rotate(90deg); }
  .right.chevron { transform: rotate(-90deg); }

  main {
    display: flex;
    flex: 1;
    min-height: 0;
    border-top: 1px solid #9b9b9b;
    border-bottom: 1px solid #a8a8a8;
    background: #f0f0f0;
  }

  .slides {
    display: flex;
    flex-direction: column;
    flex: none;
    width: 168px;
    box-sizing: border-box;
    border-left: 1px solid #a0a0a0;
    border-right: 1px solid #9b9b9b;
  }
  .slides header {
    display: flex;
    align-items: center;
    justify-content: space-between;
    height: 24px;
    padding: 0 5px 0 4px;
  }
  .x {
    width: 8px;
    height: 8px;
    line-height: 0;
  }
  .x svg {
    width: 8px;
    height: 8px;
    fill: none;
    stroke: #5c6670;
    stroke-width: 2;
  }
  .slides ol {
    flex: 1;
    margin: 0 3px 1px;
    padding: 8px;
    border-top: 1px solid #9b9b9b;
    border-left: 1px solid #9b9b9b;
    background: #fff;
    list-style: none;
  }
  .slides li {
    display: flex;
    gap: 4px;
    padding: 3px;
    border: 1px solid #5780ac;
    background: #a3c3e3;
  }
  .slides li span {
    width: 17px;
    font-weight: 700;
    line-height: 14px;
    text-align: right;
    color: #4c4c4c;
  }
  .preview {
    flex: 1;
    aspect-ratio: 4 / 3;
    border: 1px solid #8d8d8d;
    background: #fff;
    box-shadow: 1px 1px 2px #5c6d80;
  }

  .splitter {
    display: flex;
    align-items: center;
    flex: none;
    width: 7px;
  }
  .splitter.right {
    width: 5px;
    border-left: 1px solid #fff;
  }
  .split-dots {
    width: 6px;
    height: 38px;
    fill: #555;
  }

  .editor {
    display: flex;
    flex-direction: column;
    flex: 1;
    min-width: 0;
    border-top: 1px solid #5f5f5f;
    border-left: 1px solid #6a6a6a;
  }
  .tabs {
    display: flex;
    align-items: center;
    height: 30px;
    padding-left: 5px;
    box-sizing: border-box;
  }
  .tabs button {
    height: 20px;
    padding: 0 6px 0 2px;
    border: 1px solid #a7a7a7;
    border-left-width: 0;
    border-bottom: 0;
    background: linear-gradient(#f0f0f0, #e4e4e4);
  }
  .tabs button[aria-selected='true'] {
    height: 23px;
    padding: 0 4px 0 3px;
    border-left-width: 1px;
    background: #fff;
    font-weight: 700;
  }

  .stage {
    display: flex;
    flex: 1;
    min-height: 0;
  }
  .canvas {
    display: flex;
    flex-direction: column;
    flex: 1;
    min-width: 0;
  }
  .ruler-row {
    display: flex;
    gap: 1px;
    height: 24px;
    padding: 1px 0 0 4px;
    box-sizing: border-box;
  }
  .corner {
    flex: none;
    width: 18px;
    height: 18px;
    fill: none;
  }
  .corner .box { stroke: #9c9c9c; fill: #f4f4f4; }
  .corner .cross { stroke: #111; }
  .h-ruler {
    flex: 1;
    min-width: 0;
    height: 18px;
    overflow: hidden;
  }
  .outer, .cap { fill: #f0f0f0; stroke: #9c9c9c; }
  .inner { fill: #fff; }
  .h-ruler text, .v-ruler text {
    font-size: 11px;
    text-anchor: middle;
  }
  .tick { stroke: #111; fill: none; }
  .marker { fill: #e8e8e8; stroke: #555; }
  .edge { stroke: #000; }

  .work-row {
    display: flex;
    flex: 1;
    min-height: 0;
  }
  .v-ruler {
    flex: none;
    width: 26px;
    height: 100%;
    overflow: hidden;
  }
  .workspace {
    display: flex;
    justify-content: center;
    flex: 1;
    min-width: 0;
    padding: 8px 0;
    border-top: 1px solid #000;
    border-left: 1px solid #000;
    background: #aaa;
  }
  .slide {
    display: flex;
    flex-direction: column;
    gap: 12px;
    aspect-ratio: 4 / 3;
    padding: 18px 31px 49px;
    box-sizing: border-box;
    background: #fff;
    box-shadow: 1px 1px 5px 1px #555;
    font-family: 'Liberation Sans', Arial, sans-serif;
  }
  .holder {
    display: flex;
    align-items: center;
    justify-content: center;
    border: 1px dashed #c0c0c0;
  }
  .holder.title {
    flex: 79;
    font-size: 35px;
    line-height: 40px;
  }
  .holder.body {
    flex: 314;
    font-size: 26px;
    line-height: 30px;
  }

  .scroll {
    display: flex;
    flex: none;
    background: #f0f0f0;
  }
  .scroll button {
    display: flex;
    align-items: center;
    justify-content: center;
    width: 16px;
    height: 16px;
  }
  .scroll .thumb { background: #cdcdcd; }
  .scroll.h { padding-top: 1px; }
  .h .before { flex: 234; }
  .h .thumb { flex: 377; }
  .h .after { flex: 235; }
  .scroll.v {
    flex-direction: column;
    margin: 0 1px 17px 0;
  }
  .v .before { flex: 117; }
  .v .thumb { flex: 249; }
  .v .after { flex: 118; }

  .sidebar {
    display: flex;
    flex: none;
    width: 282px;
    box-sizing: border-box;
    border-left: 1px solid #9b9b9b;
    border-right: 1px solid #9b9b9b;
    padding: 3px 0 2px 3px;
  }
  .deck {
    flex: 1;
    border: 1px solid #e0e0e0;
  }
  .deck header {
    display: flex;
    align-items: center;
    justify-content: space-between;
    height: 28px;
    padding: 0 5px 0 10px;
  }
  .deck h3 {
    display: flex;
    align-items: center;
    gap: 5px;
    height: 24px;
    padding-left: 5px;
    background: linear-gradient(#dfdfdf, #f0f0f0);
    color: #2c2c2c;
  }
  .deck h3 svg {
    width: 9px;
    height: 9px;
    fill: #fff;
    stroke: #5a6a78;
  }
  .layouts {
    display: grid;
    grid-template-columns: 1fr 1fr;
    grid-auto-rows: 66px;
  }
  .layouts button {
    display: flex;
    align-items: center;
    justify-content: center;
    border: 1px solid transparent;
  }
  .layouts .chosen { border-color: #000; }
  .layouts svg {
    width: 61px;
    height: 47px;
  }
  .page { fill: #fff; stroke: url(#frame); }
  .head { fill: #fff; stroke: #bcc4ce; }
  .layouts .box { fill: #fff; stroke: #b8b8b8; }
  .stroke { fill: #2f6fa8; }

  .deck-tabs {
    display: flex;
    flex-direction: column;
    align-items: center;
    gap: 3px;
    width: 39px;
  }
  .deck-menu {
    width: 26px;
    height: 31px;
    margin-bottom: 5px;
    border-bottom: 1px solid #dcdcdc;
  }
  .deck-menu svg {
    width: 10px;
    height: 10px;
    stroke: #333f4c;
    fill: none;
  }
  .deck-menu .tri { fill: #222; stroke: none; }
  .deck-tab {
    position: relative;
    display: flex;
    align-items: center;
    justify-content: center;
    width: 32px;
    height: 32px;
    box-sizing: border-box;
    border: 1px solid transparent;
    border-radius: 3px;
  }
  .deck-tab svg { width: 24px; height: 24px; }
  .deck-tab.current { border-color: #b0b0b0; background: #e8e8e8; }
  .deck-tab.hover { border-color: #b0b0b0; background: #fff; }
  .tooltip {
    position: absolute;
    z-index: 2;
    top: 51px;
    right: -4px;
    padding: 0 2px;
    border: 1px solid #000;
    background: #ffffe1;
    line-height: 19px;
    white-space: nowrap;
    box-shadow: 2px 2px 2px #8a8a8a;
  }

  .statusbar {
    display: grid;
    grid-template-columns: 490px 222px 16px 28px 67px 1fr 143px 43px;
    align-items: center;
    height: 21px;
    border-top: 1px solid #aaa;
    background: #efefef;
  }
  .statusbar > span {
    padding-left: 5px;
    line-height: 16px;
    height: 16px;
  }
  .statusbar > span + span { border-left: 1px solid #a8a8a8; }
  .statusbar > span:nth-child(6) { border-left-color: #c8c8c8; padding-left: 2px; }
  .statusbar > .measure { padding-left: 7px; }
  .statusbar > .percent { padding-left: 7px; }
  .measure {
    display: flex;
    align-items: center;
    gap: 6px;
  }
  .measure svg {
    width: 14px;
    height: 12px;
    fill: none;
  }
  .position { width: 80px; }
  .zoomer {
    display: flex;
    align-items: center;
    gap: 4px;
  }
  .zoomer button { line-height: 0; }
  .zoomer button svg {
    width: 12px;
    height: 12px;
    fill: #cfe6f8;
    stroke: #33566f;
  }
  .zoomer input {
    appearance: none;
    width: 98px;
    height: 12px;
    background:
      linear-gradient(#777, #777) 47px 0 / 1px 12px no-repeat,
      linear-gradient(#777, #777) 0 5px / 98px 1px no-repeat;
  }
  .zoomer input::-webkit-slider-thumb {
    appearance: none;
    width: 9px;
    height: 9px;
    border: 1px solid #2c4558;
    border-radius: 50%;
    background: #5e8ba8;
  }

  .taskbar {
    position: relative;
    display: flex;
    align-items: center;
    height: 40px;
    background: #6b262b;
    overflow: hidden;
  }
  .petals {
    position: absolute;
    inset: 0;
    width: 100%;
    height: 100%;
  }
  .taskbar button, .taskbar > span, .tray { position: relative; }
  .start {
    width: 50px;
    height: 40px;
    line-height: 0;
  }
  .start svg {
    width: 26px;
    height: 26px;
    fill: #fff;
  }
  .task {
    width: 55px;
    height: 38px;
    margin-left: 2px;
    border: 1px solid #f0d0d2;
    background: linear-gradient(135deg, #c48c90, #a2585e);
    line-height: 0;
  }
  .task svg { width: 32px; height: 32px; }
  .task-edge {
    width: 3px;
    height: 36px;
    border: 1px solid #e5c0c2;
    border-left: 0;
    background: #a2676b;
  }
  .tray {
    display: flex;
    align-items: center;
    height: 100%;
    margin-left: auto;
    padding-right: 14px;
    color: #fff;
  }
  .tray button { line-height: 0; padding: 0 4px; }
  .tray svg { width: 16px; height: 16px; }
  .tray .kbd { width: 30px; height: 18px; }
  .tray .up { width: 8px; height: 5px; margin: 0 6px; }
  .lang-grip {
    width: 13px;
    height: 36px;
    margin-right: 10px;
    border: 1px solid #b0696f;
    background:
      conic-gradient(from 153deg at 50% 0, #4a1a1e 54deg, transparent 54deg) 50% 5px / 8px 5px no-repeat,
      conic-gradient(from -27deg at 50% 100%, #4a1a1e 54deg, transparent 54deg) 50% 27px / 8px 5px no-repeat,
      #7d3238;
  }
  .tray .lang { padding: 0 11px; line-height: 16px; }
  .tray .clock {
    display: flex;
    flex-direction: column;
    align-items: center;
    font-size: 12px;
    line-height: 17px;
  }
</style>
